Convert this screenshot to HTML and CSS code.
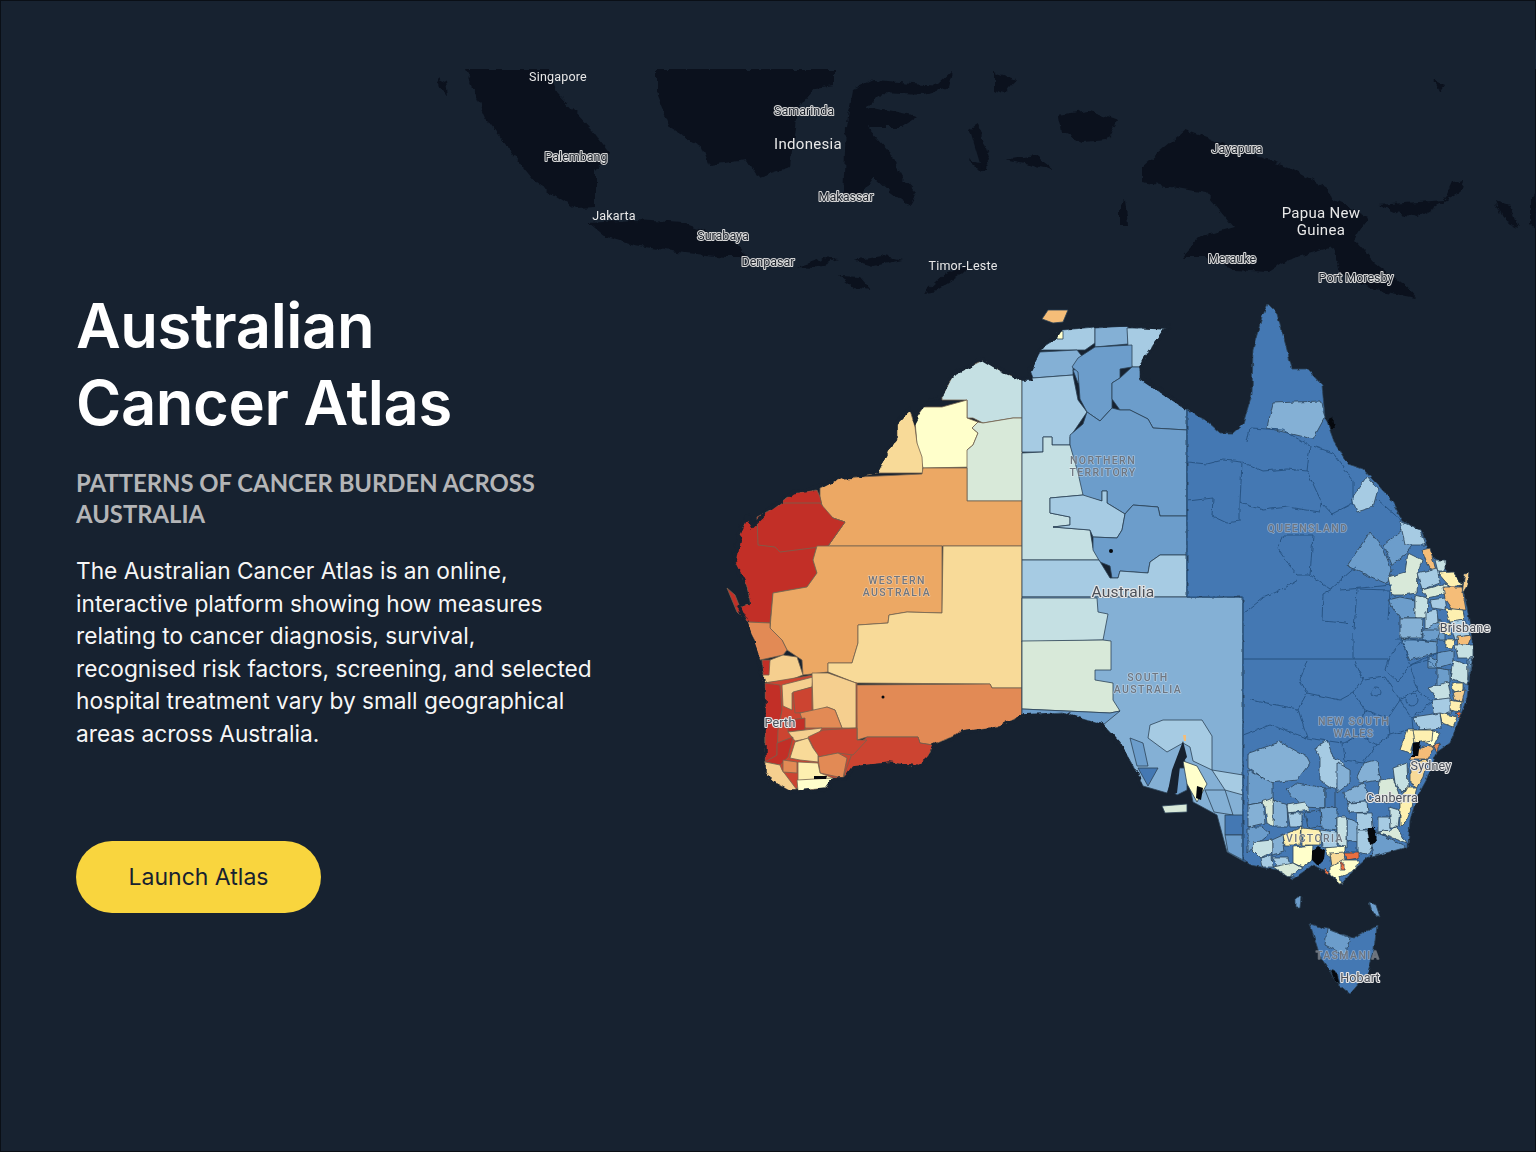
FILE: index.html
```html
<!DOCTYPE html>
<html lang="en">
<head>
  <meta charset="UTF-8">
  <meta name="viewport" content="width=device-width, initial-scale=1.0">
  <title>Australian Cancer Atlas</title>
  <link rel="stylesheet" href="styles.css">
</head>
<body>
  <main class="hero">
    <svg class="atlas-map" viewBox="0 0 1536 1152" aria-hidden="true">
      <defs>
        <!-- wobble so hand drawn outlines read like real coastline -->
        <filter id="rough" x="-5%" y="-5%" width="110%" height="110%" color-interpolation-filters="sRGB">
          <feTurbulence type="fractalNoise" baseFrequency="0.11" numOctaves="3" seed="4"/>
          <feDisplacementMap in="SourceGraphic" scale="7" xChannelSelector="R" yChannelSelector="G"/>
        </filter>
        <filter id="rough-fine" x="-5%" y="-5%" width="110%" height="110%" color-interpolation-filters="sRGB">
          <feTurbulence type="fractalNoise" baseFrequency="0.16" numOctaves="2" seed="9"/>
          <feDisplacementMap in="SourceGraphic" scale="4" xChannelSelector="R" yChannelSelector="G"/>
        </filter>
      </defs>

      <!-- neighbouring islands -->
      <g class="island">
        <polygon points="465,69 550,69 557,93 592,130 610,153 596,170 596,207 575,208 536,183 515,157 486,117"/>
        <polygon points="656,69 835,69 835,85 814,88 797,110 790,167 758,177 747,160 709,165 702,147 670,127 656,93"/>
        <polygon points="853,90 874,80 938,85 952,72 948,87 924,95 881,93 867,107 917,117 902,127 867,127 888,150 902,177 917,193 910,205 888,190 874,177 860,197 843,200 846,127"/>
        <polygon points="589,223 634,220 684,223 733,240 747,257 726,257 677,252 634,245 606,237"/>
        <polygon points="797,267 825,258 839,260 814,268"/>
        <polygon points="853,260 881,255 902,260 874,266"/>
        <polygon points="924,292 945,273 973,263 959,277 938,290"/>
        <polygon points="839,276 860,277 871,290 853,287"/>
        <polygon points="1058,115 1089,110 1118,120 1107,140 1082,142 1061,132"/>
        <polygon points="1142,167 1185,130 1241,150 1290,167 1329,190 1333,200 1368,217 1354,240 1375,263 1410,290 1417,298 1375,290 1340,273 1333,247 1287,260 1269,272 1234,270 1206,257 1181,257 1199,237 1234,227 1206,193 1142,182"/>
        <polygon points="1378,205 1445,200 1453,182 1463,180 1460,193 1417,217 1396,213"/>
        <polygon points="1005,160 1035,155 1054,170 1020,163"/>
        <polygon points="968,160 988,165 980,172"/>
        <polygon points="994,72 1016,80 1005,93 994,90"/>
        <polygon points="970,130 978,125 990,160 982,170"/>
        <polygon points="1120,205 1125,200 1128,225 1120,225"/>
        <polygon points="1495,200 1510,205 1518,228 1505,222"/>
        <polygon points="1434,80 1445,85 1440,92"/>
        <polygon points="1530,200 1536,190 1536,230 1530,225"/>
        <polygon points="437,78 446,82 448,95 440,90"/>
      </g>
      <rect class="map-top" x="430" y="40" width="1106" height="29"/>

      <!-- western australia -->
      <g class="land warm">
        <polygon class="red" points="727,588 735,595 741,610 745,620 737,612"/>
        <polygon class="ice" points="942,397 953,375 983,360 1003,372 1022,380 1022,418 1013,418 983,423 973,418 967,418 967,400 942,400"/>
        <polygon class="lemon" points="923,407 942,407 967,400 967,418 978,422 972,428 978,433 973,445 967,450 977,460 975,467 923,468 917,447 915,420"/>
        <polygon class="mint" points="978,422 983,423 1013,418 1022,418 1022,501 967,501 967,450 973,445 978,433 972,428"/>
        <polygon class="sand" points="910,410 915,427 917,443 922,457 923,473 877,473 858,477 877,472 888,450 897,440 897,423"/>
        <polygon class="orange" points="820,488 840,478 858,477 922,474 923,468 967,468 967,501 1022,501 1022,546 828,546 845,522 833,518 823,510 820,497"/>
        <polygon class="red" points="817,490 820,497 823,510 833,518 845,522 828,546 817,546 813,560 817,573 807,587 773,593 770,623 747,622 740,607 750,603 747,587 735,563 740,533 747,517 753,527 770,510 793,493"/>
        <polygon class="red" points="757,517 783,503 820,503 833,518 845,522 828,546 780,552 775,547 758,545"/>
        <polygon class="orange" points="817,546 942,546 942,613 907,612 889,615 888,623 858,625 858,643 852,663 828,663 828,672 803,675 802,660 787,650 782,640 770,628 773,593 807,587 817,573 813,560"/>
        <polygon class="sand" points="943,546 1022,546 1022,688 992,688 990,684 856,683 828,672 828,663 852,663 858,643 858,625 888,623 889,615 907,612 942,613"/>
        <polygon class="coral" points="856,685 990,684 992,688 1022,688 1022,715 1000,727 963,732 933,745 920,743 918,737 867,737 857,740"/>
        <polygon class="rust" points="867,737 918,737 920,743 933,745 927,760 917,767 890,763 853,767 845,778 843,760 857,745"/>
        <polygon class="coral" points="747,622 770,623 770,628 782,640 787,650 783,655 760,660"/>
        <polygon class="tan" points="770,660 783,655 797,657 803,675 790,680 763,683 763,675"/>
        <polygon class="red" points="762,660 770,660 769,675 763,675"/>
        <!-- south west corner backing, no sea should show between the small areas -->
        <polygon class="rust" points="765,683 813,675 857,683 857,740 843,778 833,778 790,790 765,773"/>
        <polygon class="red" points="765,683 780,685 782,710 778,730 777,757 765,762"/>
        <polygon class="tan" points="782,685 813,677 812,687 792,693 792,710 783,706"/>
        <polygon class="rust" points="793,692 812,687 812,712 795,713"/>
        <polygon class="tan" points="812,673 828,673 856,683 856,728 842,728 835,710 827,707 817,712 813,710"/>
        <polygon class="coral" points="800,713 827,707 835,710 842,728 805,728"/>
        <polygon class="red" points="788,720 805,718 805,730 788,732"/>
        <polygon class="tan" points="788,732 822,728 817,737 795,741"/>
        <polygon class="rust" points="808,737 823,730 857,728 857,740 867,740 853,755 838,753 818,757 813,747"/>
        <polygon class="coral" points="818,757 838,753 847,758 843,778 820,773"/>
        <polygon class="sand" points="790,758 795,742 808,738 813,748 818,755 818,762 800,760"/>
        <polygon class="red" points="777,743 793,737 788,757 780,765 765,762 777,755"/>
        <polygon class="tan" points="765,762 780,765 782,770 797,790 790,791 770,780 765,773"/>
        <polygon class="cream" points="798,762 818,763 820,773 833,778 827,788 798,790"/>
        <polygon class="lemon" points="797,780 833,778 827,788 798,791"/>
        <polygon class="coral" points="783,760 797,762 797,773 783,772"/>
      </g>
      <polygon class="black" points="814,776 827,776 826,779 814,779"/>
      <circle class="black" cx="883" cy="697" r="1.5"/>

      <!-- northern territory -->
      <g class="land">
        <polygon class="apricot" points="1042,319 1048,310 1068,310 1063,322 1053,323"/>
        <polygon class="sky" points="1043,347 1057,338 1062,330 1095,327 1095,343 1085,350 1077,350 1040,350"/>
        <polygon class="lemon" points="1057,332 1063,331 1063,339 1057,339"/>
        <polygon class="blue" points="1030,370 1040,352 1077,350 1085,360 1073,368 1073,375 1033,378"/>
        <polygon class="steel" points="1073,370 1088,368 1088,383 1078,383"/>
        <polygon class="sky" points="1022,380 1033,378 1073,375 1078,400 1087,412 1070,437 1070,445 1052,445 1052,437 1043,437 1043,452 1022,452"/>
        <polygon class="blue" points="1095,328 1128,326 1128,344 1095,347"/>
        <polygon class="sky" points="1127,328 1167,328 1153,347 1140,367 1132,367 1128,347"/>
        <polygon class="steel" points="1095,347 1132,345 1132,367 1120,369 1120,378 1112,383 1112,408 1100,421 1087,412 1080,399 1078,372 1072,367 1078,358"/>
        <polygon class="steel" points="1120,378 1132,367 1140,367 1140,378 1160,392 1187,410 1187,430 1153,428 1148,419 1130,410 1120,410 1112,399 1112,383"/>
        <polygon class="steel" points="1087,412 1100,421 1112,408 1120,410 1130,410 1148,419 1153,428 1187,430 1187,516 1160,516 1158,507 1133,505 1125,514 1107,503 1107,491 1102,491 1102,501 1083,496 1078,485 1070,446 1070,435 1083,424"/>
        <polygon class="ice" points="1022,453 1043,452 1043,437 1052,437 1052,445 1070,445 1078,473 1083,495 1050,498 1050,513 1070,517 1070,525 1053,527 1090,530 1093,548 1100,560 1022,560"/>
        <polygon class="sky" points="1050,498 1083,495 1102,501 1102,491 1107,491 1107,503 1125,514 1122,530 1117,538 1093,537 1090,530 1053,527 1070,525 1070,517 1050,513"/>
        <polygon class="steel" points="1125,514 1133,505 1158,507 1160,516 1187,516 1187,555 1160,555 1150,562 1148,573 1120,571 1118,578 1112,578 1110,566 1100,562 1093,550 1093,537 1117,538 1122,530"/>
        <polygon class="sky" points="1022,560 1099,560 1110,578 1118,578 1120,571 1148,573 1150,562 1160,555 1187,555 1187,597 1022,597"/>
      </g>
      <circle class="black" cx="1111" cy="551" r="2"/>

      <!-- south australia -->
      <g class="land">
        <polygon class="blue" points="1022,716 1062,713 1103,725 1120,743 1133,766 1143,786 1167,793 1183,752 1193,802 1217,815 1227,852 1243,861 1243,597 1022,597"/>
        <polygon class="ice" points="1022,598 1097,598 1098,612 1108,614 1103,640 1022,642"/>
        <polygon class="mint" points="1022,641 1103,640 1111,641 1111,670 1095,670 1095,680 1113,683 1113,700 1120,711 1110,713 1022,709"/>
        <polygon class="steel" points="1022,709 1110,713 1120,711 1103,725 1062,713 1022,716"/>
        <polygon class="sky" points="1150,725 1163,720 1202,720 1212,736 1212,770 1193,761 1190,747 1183,743 1167,752 1148,738"/>
        <polygon class="steel" points="1130,738 1143,743 1148,766 1137,766"/>
        <polygon class="deep" points="1138,768 1158,768 1148,786"/>
        <polygon class="steel" points="1170,790 1178,768 1187,768 1187,790 1177,795"/>
        <polygon class="lemon" points="1183,761 1197,766 1207,784 1197,802 1187,784"/>
        <polygon class="sky" points="1212,770 1243,775 1243,795 1225,790"/>
        <polygon class="blue" points="1205,790 1225,790 1233,815 1214,812"/>
        <polygon class="deep" points="1225,815 1243,815 1243,835 1225,835"/>
        <polygon class="steel" points="1225,835 1243,835 1243,860 1228,852"/>
        <polygon class="mint" points="1162,806 1187,804 1187,812 1165,813"/>
      </g>
      <polygon class="sea" points="1183,741 1187,757 1180,766 1177,793 1167,796 1172,770"/>
      <polygon class="black" points="1197,786 1203,788 1201,800 1196,798"/>
      <polygon class="apricot" points="1183,735 1186,735 1186,741 1184,741"/>

      <!-- sea coloured line nibbles the coast, leaves state borders straight -->
      <path class="coast-edge" d="M1187 408L1160 390L1142 378L1140 366L1153 347L1167 327L1127 325L1095 325L1062 328L1057 336L1043 345L1038 352L1029 370L1032 379L1022 379L1003 371L983 359L953 374L941 396L923 405L915 420L909 409L896 423L896 440L887 450L876 472L858 476L840 477L820 487L793 492L770 509L753 526L747 516L739 533L734 563L746 587L749 603L739 607L746 623L759 660L761 675L764 683L764 762L764 773L769 781L790 792L798 792L827 789L834 779L845 779L853 768L890 764L917 768L928 760L934 746L963 733L1000 728L1022 716L1062 714L1103 726L1119 744L1132 767L1142 787"/>

      <!-- queensland and inland nsw, vic -->
      <g class="wobbly">
        <polygon class="coast deep" points="1187,410 1207,421 1220,433 1233,433 1243,424 1252,394 1253,349 1262,317 1268,304 1277,313 1283,335 1292,369 1307,369 1322,385 1325,417 1335,444 1348,464 1363,469 1373,480 1390,498 1403,521 1422,532 1430,553 1447,571 1463,589 1467,607 1472,639 1473,652 1467,698 1457,725 1450,743 1437,752 1427,779 1417,797 1410,820 1408,847 1372,854 1357,867 1342,883 1327,872 1313,865 1293,879 1277,870 1250,865 1243,861 1243,659 1243,597 1187,597"/>
        <g class="land">
          <polygon class="blue" points="1273,403 1320,401 1325,417 1313,439 1267,428"/>
          <polygon class="sky" points="1352,498 1367,476 1378,489 1373,507 1357,512"/>
          <polygon class="steel" points="1347,566 1370,532 1383,548 1392,571 1387,584 1367,575"/>
          <polygon class="steel" points="1384,545 1402,530 1420,535 1405,555 1392,565"/>
          <polygon class="sky" points="1400,521 1420,530 1425,545 1405,545"/>
          <polygon class="steel" points="1388,600 1400,597 1415,600 1415,618 1400,618"/>
          <polygon class="steel" points="1400,638 1437,642 1437,653 1410,660"/>
          <polygon class="steel" points="1430,618 1445,622 1445,640 1423,640"/>
          <polygon class="steel" points="1428,655 1437,660 1437,668 1428,668"/>
          <polygon class="blue" points="1248,753 1280,742 1307,757 1310,763 1297,780 1270,783 1248,768"/>
          <polygon class="steel" points="1248,770 1273,783 1273,800 1248,805"/>
          <polygon class="blue" points="1248,805 1263,802 1265,823 1248,827"/>
          <polygon class="steel" points="1248,827 1263,827 1270,833 1253,847 1248,853"/>
          <polygon class="steel" points="1297,783 1325,788 1325,808 1302,807 1287,790"/>
          <polygon class="deep" points="1325,788 1335,788 1335,808 1325,808"/>
          <polygon class="sky" points="1315,748 1327,740 1333,757 1343,763 1342,783 1335,790 1320,780 1320,757"/>
          <polygon class="blue" points="1337,763 1350,770 1350,783 1337,793"/>
          <polygon class="blue" points="1343,793 1363,783 1370,800 1347,803"/>
          <polygon class="blue" points="1363,763 1377,760 1380,780 1360,783 1357,777"/>
          <polygon class="sky" points="1347,803 1367,802 1368,812 1350,813"/>
          <polygon class="blue" points="1273,800 1287,805 1288,827 1273,827"/>
          <polygon class="mint" points="1262,802 1273,798 1273,827 1267,823 1265,808"/>
          <polygon class="ice" points="1287,805 1305,802 1310,810 1288,813"/>
          <polygon class="sky" points="1288,813 1303,813 1303,827 1290,827"/>
          <polygon class="deep" points="1305,812 1320,810 1322,825 1308,828"/>
          <polygon class="steel" points="1320,808 1337,808 1337,830 1322,828"/>
          <polygon class="sky" points="1357,813 1372,813 1373,828 1358,830"/>
          <polygon class="blue" points="1347,818 1358,823 1358,842 1347,840"/>
          <polygon class="ice" points="1337,817 1347,817 1347,848 1337,843"/>
          <polygon class="sky" points="1357,830 1372,830 1373,845 1367,855 1357,853"/>
          <polygon class="steel" points="1372,845 1378,833 1407,847 1372,857"/>
          <polygon class="mint" points="1378,833 1397,827 1407,843"/>
          <polygon class="sky" points="1378,817 1390,817 1390,830 1378,832"/>
          <polygon class="ice" points="1390,807 1400,810 1398,827 1390,827"/>
          <polygon class="mint" points="1380,780 1393,778 1400,797 1388,803 1378,798"/>
          <polygon class="ice" points="1393,768 1407,763 1408,787 1402,793 1395,783"/>
          <polygon class="cream" points="1407,787 1417,787 1412,807 1407,820 1400,827 1400,800"/>
          <polygon class="sand" points="1410,763 1427,760 1423,777 1417,787 1410,783"/>
          <polygon class="apricot" points="1410,760 1420,748 1435,745 1427,760"/>
          <polygon class="cream" points="1407,730 1427,730 1413,743 1410,753 1400,750"/>
          <polygon class="lemon" points="1427,727 1440,733 1433,747 1422,740"/>
          <polygon class="coral" points="1433,745 1440,743 1437,752"/>
          <polygon class="ice" points="1253,842 1272,840 1272,852 1260,858 1252,850"/>
          <polygon class="blue" points="1272,840 1283,835 1285,852 1272,855"/>
          <polygon class="sky" points="1260,858 1272,855 1273,867 1262,867"/>
          <polygon class="sky" points="1273,857 1288,857 1293,877 1280,873"/>
          <polygon class="cream" points="1283,835 1302,827 1300,845 1285,845"/>
          <polygon class="lemon" points="1293,847 1313,845 1312,860 1302,867 1293,863"/>
          <polygon class="mint" points="1273,867 1293,863 1302,868 1288,877"/>
          <polygon class="cream" points="1302,828 1320,830 1320,845 1302,845"/>
          <polygon class="sky" points="1320,830 1337,832 1337,850 1322,846"/>
          <polygon class="lemon" points="1325,848 1345,846 1345,853 1330,858"/>
          <polygon class="sand" points="1330,853 1345,852 1343,867 1332,867"/>
          <polygon class="bright" points="1345,852 1358,852 1358,858 1347,860"/>
          <polygon class="lemon" points="1343,860 1360,860 1355,870 1345,875 1340,877 1342,885 1330,875 1330,867"/>
          <polygon class="bright" points="1325,868 1329,872 1328,875 1324,872"/>
          <polygon class="bright" points="1340,863 1345,863 1345,870 1340,870"/>
          <polygon class="mint" points="1388,577 1405,572 1408,553 1422,560 1418,573 1417,593 1402,595 1392,595"/>
          <polygon class="apricot" points="1422,550 1430,548 1435,567 1437,572 1428,567"/>
          <polygon class="sky" points="1417,573 1437,568 1440,583 1422,590"/>
          <polygon class="ice" points="1435,560 1445,560 1445,572 1438,572"/>
          <polygon class="cream" points="1438,573 1453,572 1463,585 1450,587"/>
          <polygon class="mint" points="1422,590 1447,583 1450,593 1427,598"/>
          <polygon class="apricot" points="1443,587 1462,587 1466,610 1453,610 1445,598"/>
          <polygon class="tan" points="1465,573 1469,572 1467,585 1462,593"/>
          <polygon class="sky" points="1430,600 1445,598 1447,610 1432,608"/>
          <polygon class="ice" points="1415,595 1428,598 1427,618 1415,618"/>
          <polygon class="sky" points="1425,612 1437,610 1438,622 1425,630"/>
          <polygon class="cream" points="1445,608 1463,610 1465,620 1450,623"/>
          <polygon class="cream" points="1438,622 1450,623 1450,635 1440,632"/>
          <polygon class="sky" points="1450,622 1465,620 1470,635 1455,640"/>
          <polygon class="blue" points="1400,618 1423,618 1422,638 1400,638"/>
          <polygon class="steel" points="1423,630 1440,630 1437,642 1423,640"/>
          <polygon class="cream" points="1445,640 1455,640 1452,648 1445,647"/>
          <polygon class="apricot" points="1457,637 1472,635 1468,645 1458,645"/>
          <polygon class="ice" points="1455,645 1473,645 1473,658 1458,658"/>
          <polygon class="steel" points="1437,653 1453,650 1453,663 1437,668"/>
          <polygon class="ice" points="1453,660 1468,665 1468,685 1450,678"/>
          <polygon class="steel" points="1468,660 1472,655 1468,680"/>
          <polygon class="steel" points="1437,668 1450,670 1450,682 1437,688"/>
          <polygon class="ice" points="1428,688 1448,682 1452,703 1440,702"/>
          <polygon class="cream" points="1452,683 1463,683 1463,690 1453,692"/>
          <polygon class="tan" points="1453,692 1465,690 1462,702 1455,700"/>
          <polygon class="cream" points="1448,700 1462,702 1460,712 1450,710"/>
          <polygon class="sky" points="1432,700 1450,698 1450,713 1435,717"/>
          <polygon class="cream" points="1440,713 1457,717 1453,727 1442,723"/>
          <polygon class="bright" points="1455,713 1462,713 1460,718"/>
          <polygon class="sky" points="1413,717 1440,713 1442,728 1420,730"/>
          <polygon class="cream" points="1413,730 1433,730 1432,740 1415,743"/>
        </g>
        <polygon class="black" points="1413,743 1420,742 1418,757 1412,757"/>
        <polygon class="black" points="1367,828 1375,828 1377,842 1370,845"/>
        <polygon class="black" points="1312,851 1318,846 1325,850 1324,860 1318,866 1312,860"/>
        <polygon class="black" points="1328,419 1333,417 1335,428 1330,428"/>

        <!-- interior boundaries -->
        <g class="border">
          <path d="M1187 462L1207 464L1223 460L1242 462L1263 471L1287 469L1307 471"/>
          <path d="M1247 442L1250 428L1283 430L1310 446L1307 471"/>
          <path d="M1242 462L1240 503L1240 521L1227 523L1212 516L1213 498L1188 501"/>
          <path d="M1240 503L1263 510L1287 507L1320 512L1322 503L1307 471"/>
          <path d="M1313 446L1333 453L1353 480L1353 503L1332 514L1322 503"/>
          <path d="M1277 548L1283 535L1313 535L1310 575L1298 575L1290 566Z"/>
          <path d="M1310 575L1330 589L1357 566"/>
          <path d="M1243 614L1263 598L1283 589L1298 580"/>
          <path d="M1322 621L1347 623L1354 630L1357 589L1390 590L1388 620"/>
          <path d="M1322 621L1323 594L1332 589"/>
          <path d="M1353 632V659"/>
          <path d="M1388 659L1402 640"/>
          <path d="M1307 661L1300 680L1307 693L1298 709L1307 738L1343 743"/>
          <path d="M1307 693L1340 700L1353 693L1363 680L1355 661"/>
          <path d="M1388 659L1385 670L1398 682L1410 665L1402 640"/>
          <path d="M1363 680L1385 677L1400 700L1388 718L1365 710L1353 693"/>
          <path d="M1400 700L1418 690L1432 702"/>
          <path d="M1388 718L1390 735L1407 730"/>
          <path d="M1365 710L1360 735L1343 743"/>
          <path d="M1360 735L1377 745L1390 735"/>
          <path d="M1343 743L1345 760L1363 763L1377 745"/>
          <path d="M1418 690L1410 665L1428 660L1437 668"/>
          <path d="M1400 700L1412 718L1432 702M1412 718L1413 730"/>
          <path d="M1395 640H1437M1410 665L1437 653"/>
          <path d="M1378 500L1402 521M1340 590L1392 585"/>
          <path d="M1250 700L1298 709M1243 735L1270 725L1307 738"/>
          <circle cx="1412" cy="700" r="6"/>
          <circle cx="1376" cy="692" r="5"/>
        </g>
      </g>

      <!-- these two really are ruler straight -->
      <path class="state-line" d="M1187 410V597H1243V861M1243 659H1388"/>

      <!-- tasmania -->
      <g class="land tas">
        <polygon class="deep" points="1310,924 1327,929 1353,938 1377,926 1373,956 1367,974 1350,994 1337,983 1320,956"/>
        <polygon class="steel" points="1327,929 1350,938 1345,955 1325,945"/>
        <polygon class="steel" points="1296,897 1301,897 1300,908 1296,908"/>
        <polygon class="steel" points="1369,902 1376,905 1380,917 1372,912"/>
        <polygon class="black" points="1330,970 1337,972 1340,985 1335,982"/>
      </g>

      <!-- labels -->
      <g class="labels">
        <text class="place" x="558" y="81">Singapore</text>
        <text class="place big" x="808" y="149">Indonesia</text>
        <text class="place" x="614" y="220">Jakarta</text>
        <text class="place" x="963" y="270">Timor-Leste</text>
        <text class="place big" x="1321" y="218">Papua New</text>
        <text class="place big" x="1321" y="235">Guinea</text>
        <text class="town" x="804" y="115">Samarinda</text>
        <text class="town" x="576" y="161">Palembang</text>
        <text class="town" x="846" y="201">Makassar</text>
        <text class="town" x="723" y="240">Surabaya</text>
        <text class="town" x="768" y="266">Denpasar</text>
        <text class="town" x="1237" y="153">Jayapura</text>
        <text class="town" x="1232" y="263">Merauke</text>
        <text class="town" x="1356" y="282">Port Moresby</text>
        <text class="state" x="897" y="584">WESTERN</text>
        <text class="state" x="897" y="596">AUSTRALIA</text>
        <text class="state" x="1103" y="464">NORTHERN</text>
        <text class="state" x="1103" y="476">TERRITORY</text>
        <text class="state" x="1148" y="681">SOUTH</text>
        <text class="state" x="1148" y="693">AUSTRALIA</text>
        <text class="state" x="1308" y="532">QUEENSLAND</text>
        <text class="state" x="1354" y="725">NEW SOUTH</text>
        <text class="state" x="1354" y="737">WALES</text>
        <text class="state" x="1315" y="842">VICTORIA</text>
        <text class="state" x="1348" y="959">TASMANIA</text>
        <text class="city country" x="1123" y="597">Australia</text>
        <text class="city" x="780" y="727">Perth</text>
        <text class="city" x="1465" y="632">Brisbane</text>
        <text class="city" x="1431" y="770">Sydney</text>
        <text class="city" x="1392" y="802">Canberra</text>
        <text class="city" x="1360" y="982">Hobart</text>
      </g>
    </svg>

    <section class="intro">
      <h1>Australian<br>Cancer Atlas</h1>
      <h2>Patterns of cancer burden across Australia</h2>
      <p>The Australian Cancer Atlas is an online, interactive platform showing how measures relating to cancer diagnosis, survival, recognised risk factors, screening, and selected hospital treatment vary by small geographical areas across Australia.</p>
      <a class="launch" href="#">Launch Atlas</a>
    </section>
  </main>
</body>
</html>
```

FILE: styles.css
```css
:root {
  --bg: #172230;
  --yellow: #f9d53e;
}
* { box-sizing: border-box; margin: 0; padding: 0; }
body {
  background: var(--bg);
  font-family: 'Inter', 'Liberation Sans', sans-serif;
  overflow: hidden;
}
.hero {
  position: relative;
  height: 1152px;
  padding: 286px 0 0 75px;
  border: 1px solid #0a0f16;
}
/* Map sits behind everything, its coordinates are the page's */
.atlas-map {
  position: absolute;
  top: -1px; left: -1px;
  width: 1536px; height: 1152px;
  filter: blur(0.4px);
}
.intro { position: relative; width: 520px; }
h1 {
  font-size: 61.5px;
  font-weight: 600;
  line-height: 77px;
  letter-spacing: -0.4px;
  color: #fff;
}
h2 {
  margin-top: 26px;
  font-family: 'Lato', sans-serif;
  font-size: 23.85px;
  font-weight: 700;
  line-height: 31px;
  text-transform: uppercase;
  color: #b4b5b7;
}
p {
  margin-top: 26px;
  font-size: 22.7px;
  line-height: 32.5px;
  color: #f6f6f6;
}
.launch {
  display: flex;
  align-items: center;
  justify-content: center;
  margin-top: 91px;
  width: 245px; height: 72px;
  padding-bottom: 1px;
  border-radius: 36px;
  background: var(--yellow);
  color: var(--bg);
  font-size: 23px;
  text-decoration: none;
}

/* Map shapes */
.island { filter: url(#rough); }
.island polygon { fill: #0b111d; }
.map-top { fill: var(--bg); }
.wobbly, .tas { filter: url(#rough-fine); }
.land polygon, .coast {
  stroke: #2c4257;
  stroke-width: 0.8;
  stroke-linejoin: round;
}
.warm polygon { stroke: #75634f; }
.coast-edge {
  fill: none;
  stroke: var(--bg);
  stroke-width: 3.5;
  filter: url(#rough);
}
.border path, .border circle {
  fill: none;
  stroke: #25507f;
  stroke-width: 0.9;
}
.state-line {
  fill: none;
  stroke: #25507f;
  stroke-width: 1;
}
.sea { fill: var(--bg); }
.black { fill: #05080d; }
.red { fill: #c22f27; }
.rust { fill: #cc4431; }
.bright { fill: #ec6f3f; }
.coral { fill: #e28a55; }
.orange { fill: #eca864; }
.apricot { fill: #f5bd78; }
.tan { fill: #f5cf8f; }
.sand { fill: #f8da98; }
.cream { fill: #fdf0b0; }
.lemon { fill: #ffffcb; }
.mint { fill: #d8e9d9; }
.ice { fill: #c5e0e3; }
.sky { fill: #a6cbe3; }
.blue { fill: #84b0d5; }
.steel { fill: #6c9dcb; }
.deep { fill: #4478b3; }

/* Map labels */
.labels text {
  font-family: 'Roboto', sans-serif;
  text-anchor: middle;
  paint-order: stroke;
  stroke-linejoin: round;
}
.place { font-size: 12.5px; fill: #e8e8e8; letter-spacing: 0.2px; }
.place.big { font-size: 15px; letter-spacing: 0.3px; }
.town {
  font-size: 12.5px;
  fill: #20262f;
  stroke: #d8d8d8;
  stroke-width: 2px;
}
.state {
  font-size: 10.5px;
  font-weight: 500;
  letter-spacing: 1.4px;
  fill: #6f7680;
  stroke: rgba(255,255,255,0.35);
  stroke-width: 1.5px;
}
.city {
  font-size: 12.5px;
  fill: #4a4f58;
  stroke: #e6e6e6;
  stroke-width: 2.2px;
  letter-spacing: 0.2px;
}
.city.country { font-size: 15.5px; }
```
